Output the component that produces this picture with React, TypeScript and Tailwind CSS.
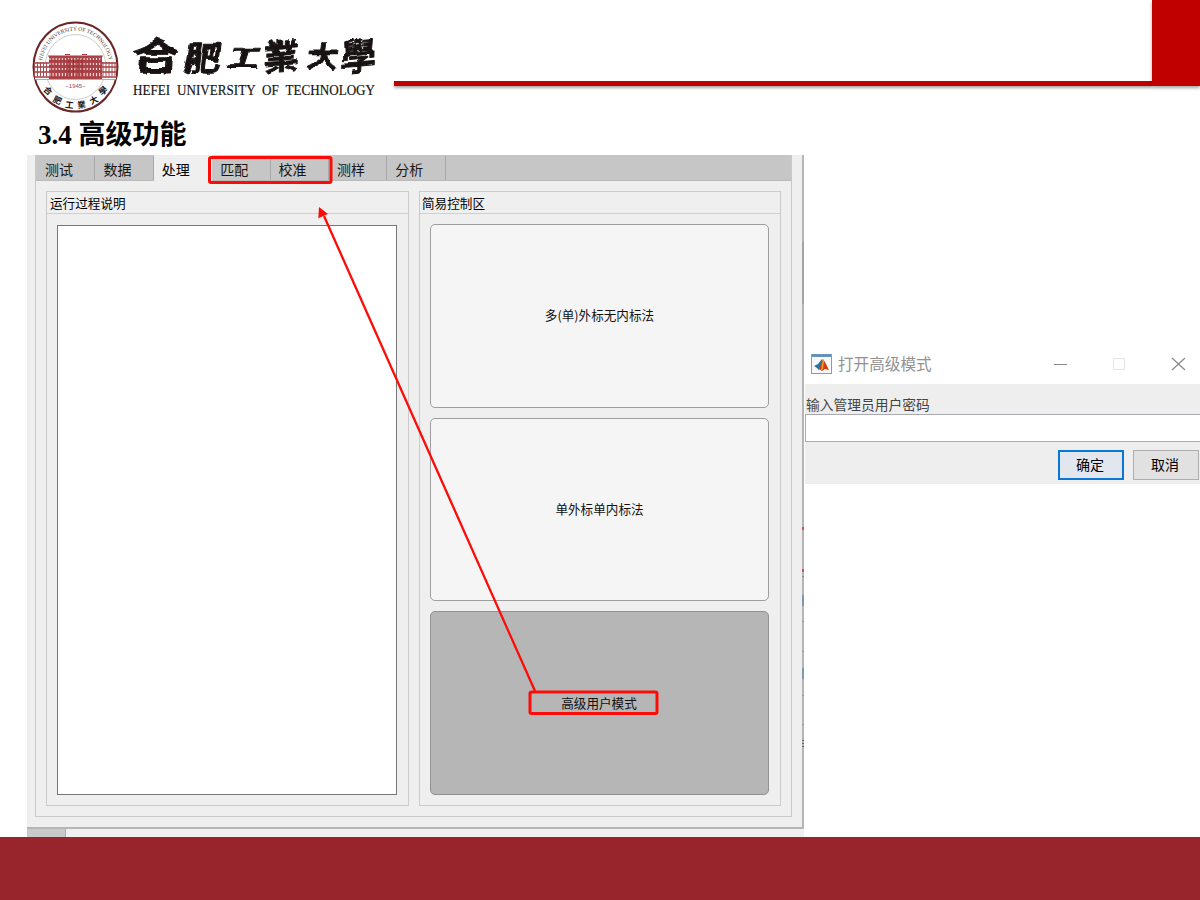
import React from 'react';

const tabs = ['测试', '数据', '处理', '匹配', '校准', '测样', '分析'];
const edgeMarks: { y: number; h: number; color: string }[] = [
  { y: 87, h: 62, color: '#a4a4a4' },
  { y: 372, h: 3, color: '#d05055' },
  { y: 414, h: 3, color: '#d05055' },
  { y: 421, h: 1, color: '#8b8b8b' },
  { y: 440, h: 11, color: '#8097ad' },
  { y: 466, h: 1, color: '#989898' },
  { y: 496, h: 1, color: '#989898' },
  { y: 513, h: 11, color: '#8097ad' },
  { y: 540, h: 1, color: '#989898' },
  { y: 569, h: 1, color: '#989898' },
  { y: 585, h: 1, color: '#666' },
  { y: 588, h: 1, color: '#666' },
  { y: 591, h: 1, color: '#666' },
];

function Seal() {
  const columns = Array.from({ length: 17 }, (_, i) => 18 + i * 3.1);
  const wings = [2.5, 5.5, 8.5, 11.5, 14.5, 71, 74, 77, 80, 83];
  return (
    <svg className="block h-[92px] w-[88px] shrink-0" viewBox="0 0 88 92">
      <defs>
        <path id="upper-arc" d="M9.5 46 A34 36.5 0 0 1 77.5 46" />
      </defs>
      <ellipse cx="43.5" cy="46" rx="42" ry="44.5" fill="white" stroke="#6b2527" strokeWidth="2" />
      <ellipse cx="43.5" cy="46" rx="30.5" ry="32.5" fill="none" stroke="#aaa" strokeWidth=".6" />
      <text fill="#333" fontSize="5.5" fontFamily="Liberation Serif, serif">
        <textPath href="#upper-arc" startOffset="50%" textAnchor="middle">HEFEI UNIVERSITY OF TECHNOLOGY</textPath>
      </text>
      <rect x="3" y="41" width="81" height="17.5" fill="white" />
      <rect x="17" y="35" width="53" height="23" fill="#ad464b" />
      <path d="M16 35h55M33 33.5h5M50 33.5h5M17 40h53M17 45h53M17 50h53" stroke="#a63a40" strokeWidth="1.2" />
      {columns.map((x) => (
        <path key={x} d={`M${x} 37v2M${x} 42v2M${x} 47v2M${x} 52v4`} stroke="#f2dede" strokeWidth="1.1" />
      ))}
      {[37, 41.5, 46, 50].map((x) => (
        <path key={x} d={`M${x} 38v17`} stroke="#982d33" strokeWidth="1.1" />
      ))}
      <path d="M2 42h15M70 42h15M2 46h15M70 46h15M2 51h15M70 51h15M2 56h83" stroke="#a63a40" strokeWidth="1.5" />
      {wings.map((x) => (
        <path key={x} d={`M${x} 41v14`} stroke="#a84a4e" strokeWidth="1" />
      ))}
      <path d="M3 58.5h81" stroke="#bc7779" strokeWidth=".7" />
      <text x="43.5" y="67" textAnchor="middle" fill="#9c4c4f" fontSize="6" fontFamily="Liberation Sans, sans-serif">−1945−</text>
      <g fill="#171313" fontSize="8.5" fontWeight="700" fontFamily="Noto Sans CJK TC, sans-serif" textAnchor="middle">
        <text transform="translate(14 72) rotate(40)">合</text>
        <text transform="translate(24 82) rotate(25)">肥</text>
        <text transform="translate(37 87) rotate(8)">工</text>
        <text transform="translate(50 87) rotate(-8)">業</text>
        <text transform="translate(63 82) rotate(-25)">大</text>
        <text transform="translate(73 72) rotate(-40)">學</text>
      </g>
    </svg>
  );
}

function UniversityName() {
  return (
    <div className="w-[262px] shrink-0 pl-[13px] pt-[7px]">
      <svg className="block h-[54px] w-[248px] overflow-visible" viewBox="0 -10 248 54" fill="#181312" stroke="#181312" strokeWidth=".9" strokeLinejoin="round" fontWeight="700" fontFamily="Noto Sans CJK TC, sans-serif">
        <defs>
          <filter id="ink" x="-5%" y="-20%" width="110%" height="140%" colorInterpolationFilters="sRGB">
            <feTurbulence type="fractalNoise" baseFrequency=".07" numOctaves="1" seed="4" />
            <feDisplacementMap in="SourceGraphic" scale="8" xChannelSelector="R" yChannelSelector="G" />
          </filter>
        </defs>
        <g filter="url(#ink)">
          <text fontSize="37" transform="translate(-2 33) skewX(-4) scale(1.28 1)">合</text>
          <text fontSize="33" transform="translate(50 34) skewX(-8) scale(1.12 1)">肥</text>
          <text fontSize="29" transform="translate(92 30) skewX(-18) scale(1.12 .87)">工</text>
          <text fontSize="35" transform="translate(131 34) rotate(-4) skewX(-5)">業</text>
          <text fontSize="31" transform="translate(173 31) skewX(-5)">大</text>
          <text fontSize="35" transform="translate(208 34) rotate(-5) skewX(-6)">學</text>
        </g>
      </svg>
      <svg className="block h-[20px] w-[248px] overflow-visible" viewBox="0 0 248 20">
        <text x="0" y="13.5" fontSize="14" textLength="242" lengthAdjust="spacingAndGlyphs" fill="#171515" stroke="#171515" strokeWidth=".2" fontFamily="Liberation Serif, serif" wordSpacing="4">HEFEI UNIVERSITY OF TECHNOLOGY</text>
      </svg>
    </div>
  );
}

function MethodButton({ children, dark = false }: { children: React.ReactNode; dark?: boolean }) {
  return (
    <button className={dark ? 'flex w-full flex-1 items-center justify-center rounded-[5px] border border-[#929292] bg-[#b6b6b6] pr-[1px] text-[12.6px] leading-[18px] text-[#111]' : 'flex w-full flex-1 items-center justify-center rounded-[5px] border border-[#9e9e9e] bg-[#f5f5f5] text-[12.6px] text-[#111]'}>
      {children}
    </button>
  );
}

function AnalysisWindow() {
  return (
    <section className="h-[682px] w-[777px] shrink-0">
      <div className="relative h-[674px] border-r-2 border-b-2 border-[#b5b5b5] bg-[#efefef] pl-[8px]">
        <div className="h-[662px] w-[757px] border-x border-b border-[#c9c9c9]">
          <nav className="flex h-[26px] border-y border-[#b9b9b9] border-t-[#c6c6c6] bg-[#c6c6c6] pl-px">
            {tabs.map((tab) => (
              <div key={tab} className={tab === '处理' ? '-mt-px h-[26px] w-[58.4px] bg-[#efefef] pl-[8px] text-[14px] leading-[29px]' : 'h-[24px] w-[58.4px] border-r border-[#a9a9a9] pl-[8px] text-[14px] leading-[27px] text-[#171717]'}>{tab}</div>
            ))}
          </nav>
          <div className="flex h-[635px] gap-[10px] px-[10px] pt-[10px] pb-[11px]">
            <section className="h-[615px] w-[363px] border border-[#cbcbcb]">
              <h2 className="h-[22px] border-b border-[#cfcfcf] pl-[3px] text-[12.6px] leading-[21px]">运行过程说明</h2>
              <div className="mr-[11px] ml-[10px] mt-[11px] h-[570px] border border-[#777] bg-white" />
            </section>
            <section className="h-[615px] w-[362px] border border-[#cbcbcb]">
              <h2 className="h-[22px] border-b border-[#cfcfcf] pl-[2px] text-[12.6px] leading-[21px]">简易控制区</h2>
              <div className="mr-[11px] ml-[10px] mt-[10px] flex h-[571px] flex-col gap-[10px]">
                <MethodButton>多(单)外标无内标法</MethodButton>
                <MethodButton>单外标单内标法</MethodButton>
                <MethodButton dark>高级用户模式</MethodButton>
              </div>
            </section>
          </div>
        </div>
        {edgeMarks.map((mark) => (
          <i key={mark.y} className="absolute -right-[2px] w-[2px]" style={{ top: mark.y, height: mark.h, background: mark.color }} />
        ))}
      </div>
      <div className="flex h-[8px] bg-[#f0f0f0]"><div className="w-[39px] border-r border-[#aaa] bg-[#c7c9ca]" /></div>
    </section>
  );
}

function PasswordDialog() {
  return (
    <section className="mt-[189px] h-[140px] w-[395px] shrink-0">
      <header className="flex h-[40px] items-center bg-white pl-[6px] text-[#929292]">
        <svg className="mr-[6px] h-[20px] w-[21px]" viewBox="0 0 21 20">
          <rect x=".5" y=".5" width="20" height="19" fill="#f8f8f8" stroke="#999" />
          <path d="M1 0h19v3H1z" fill="#6590b7" />
          <path d="M3 12l4-2 4-5 1 5-4 6-2-2z" fill="#2473a5" />
          <path d="M8 15l4-10 2 3 4 8-4-1-3 2z" fill="#d33d1a" />
          <path d="M12 5l1 2-1 8-2 2 1-7z" fill="#f39b26" />
        </svg>
        <span className="w-[215px] text-[15.6px]">打开高级模式</span>
        <svg className="h-[16px] w-[138px]" viewBox="0 0 138 16" fill="none">
          <path d="M1 8.5h13" stroke="#888" />
          <path d="M60.5 2.5h11v11h-11z" stroke="#e4e4e4" />
          <path d="M119 2l13 12M132 2L119 14" stroke="#888" strokeWidth="1.2" />
        </svg>
      </header>
      <div className="h-[100px] bg-[#eee] pt-[12px]">
        <label className="block h-[17px] pl-px text-[13.75px] leading-[17px] text-[#444]">输入管理员用户密码</label>
        <input className="mt-px block h-[28px] w-[397px] border border-[#a9aab0] bg-white" />
        <div className="mt-[8px] flex gap-[9px] pl-[253px] text-[14px]">
          <button className="h-[30px] w-[66px] shrink-0 border-2 border-[#0878d8] bg-[#e2e6ee] pr-[2px] pb-[2px] leading-[24px]">确定</button>
          <button className="h-[30px] w-[66px] shrink-0 border border-[#adadad] bg-[#e1e1e1] pr-[2px] pb-[2px] leading-[24px]">取消</button>
        </div>
      </div>
    </section>
  );
}

export default function App() {
  return (
    <main className="relative h-[900px] w-[1200px] overflow-hidden bg-white font-['Noto_Sans_CJK_SC',sans-serif] text-black">
      <header className="flex h-[116px] pl-[32px]">
        <div className="pt-[21px]"><Seal /></div>
        <div className="pt-[20px]"><UniversityName /></div>
        <div className="ml-[12px] mt-[81px] h-[5px] flex-1 bg-[#c00000] shadow-[0_2px_3px_rgba(0,0,0,.35)]" />
        <div className="h-[86px] w-[48px] bg-[#c00000] shadow-[0_2px_3px_rgba(0,0,0,.35)]" />
      </header>
      <h1 className="h-[39px] pl-[38px] font-['Liberation_Serif','Noto_Sans_CJK_SC',serif] text-[27px] leading-[38px] font-bold">3.4 高级功能</h1>
      <div className="flex h-[682px] gap-[1px] pl-[27px]">
        <AnalysisWindow />
        <PasswordDialog />
      </div>
      <footer className="h-[63px] bg-[#98252c]" />
      <svg className="pointer-events-none absolute inset-0 h-[900px] w-[1200px]" viewBox="0 0 1200 900" fill="none" stroke="#fc0c08">
        <rect x="209.5" y="157.5" width="121.5" height="25" rx="1.5" strokeWidth="3" />
        <rect x="530" y="692" width="127" height="21.5" rx="1.5" strokeWidth="3" />
        <path d="M535 691L324 216" strokeWidth="2.3" />
        <path d="M319 207l-.7 11.3 9.7-4.4z" fill="#fc0c08" stroke="none" />
      </svg>
    </main>
  );
}
